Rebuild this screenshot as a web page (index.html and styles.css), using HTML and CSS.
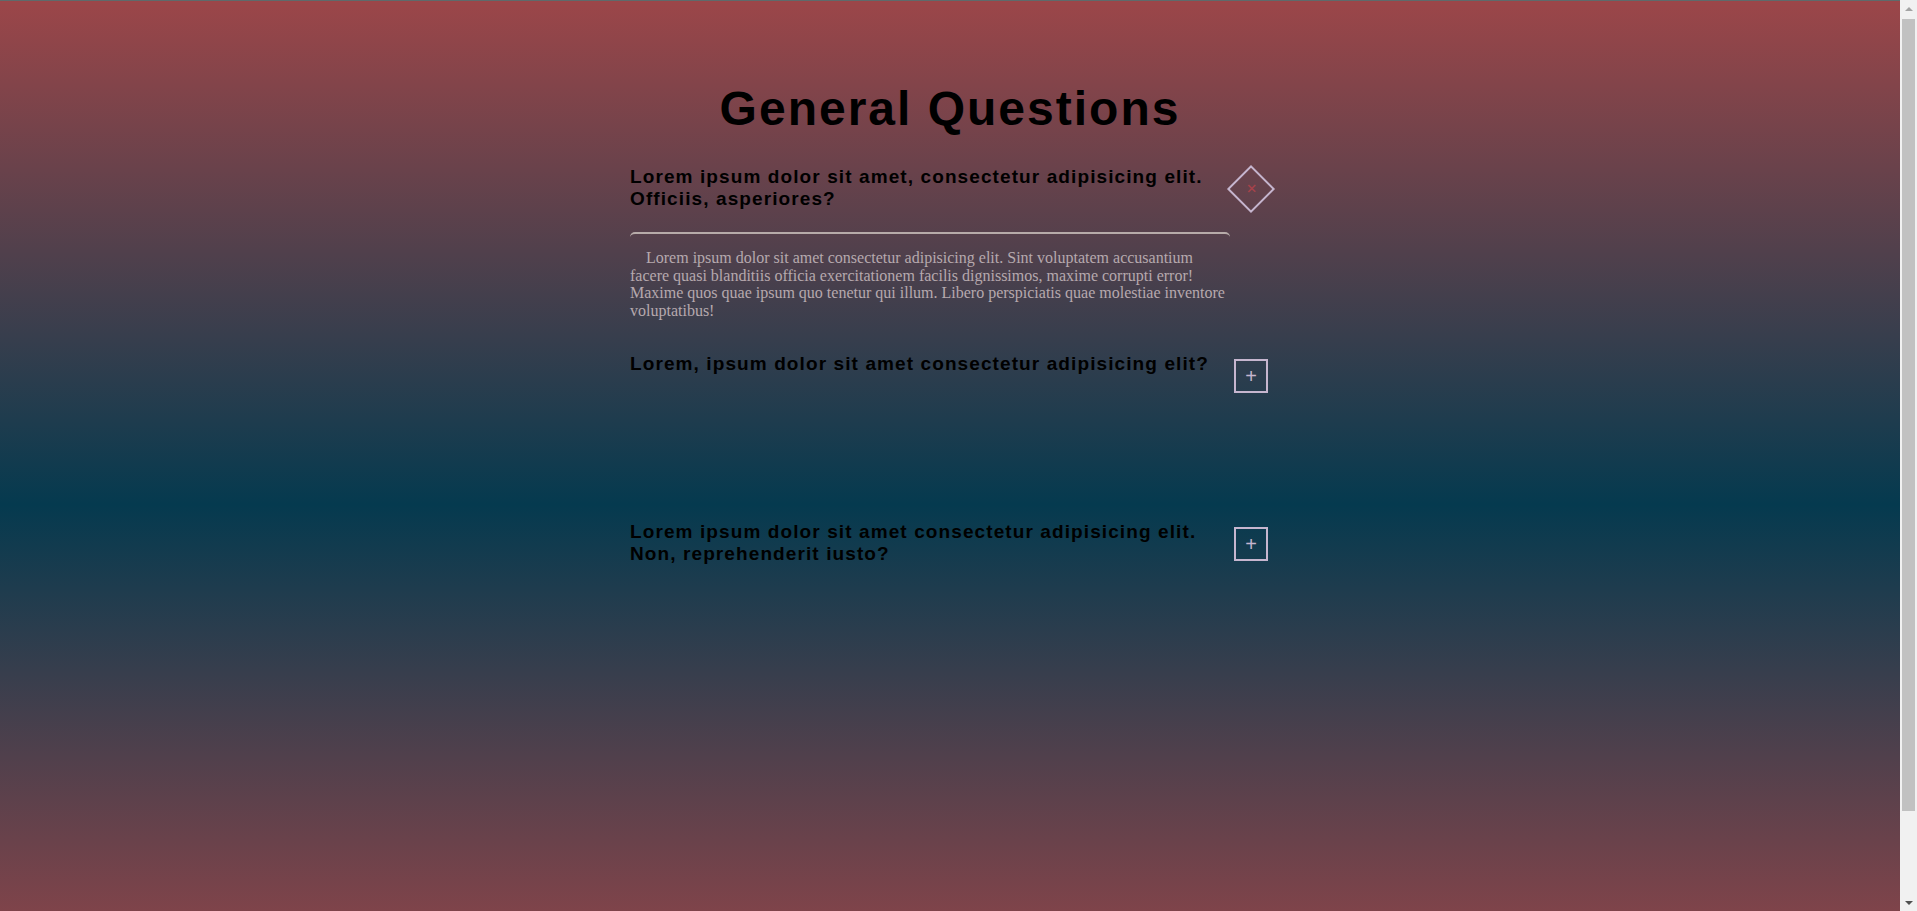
FILE: index.html
```html
<!DOCTYPE html>
<html lang="en">
<head>
<meta charset="utf-8">
<title>General Questions</title>
<link rel="stylesheet" href="styles.css">
</head>
<body>
<div class="page">
  <main class="faq">
    <h1 class="faq-title">General Questions</h1>

    <section class="item item-open">
      <div class="question">
        <h3 class="question-text">Lorem ipsum dolor sit amet, consectetur adipisicing elit. Officiis, asperiores?</h3>
        <button class="toggle" type="button"><span class="toggle-sign">+</span></button>
      </div>
      <div class="answer">
        <p class="answer-text">Lorem ipsum dolor sit amet consectetur adipisicing elit. Sint voluptatem accusantium facere quasi blanditiis officia exercitationem facilis dignissimos, maxime corrupti error! Maxime quos quae ipsum quo tenetur qui illum. Libero perspiciatis quae molestiae inventore voluptatibus!</p>
      </div>
    </section>

    <section class="item">
      <div class="question">
        <h3 class="question-text">Lorem, ipsum dolor sit amet consectetur adipisicing elit?</h3>
        <button class="toggle" type="button"><span class="toggle-sign">+</span></button>
      </div>
      <div class="answer">
        <p class="answer-text">Lorem ipsum dolor sit amet consectetur adipisicing elit. Sint voluptatem accusantium facere quasi blanditiis officia exercitationem facilis dignissimos, maxime corrupti error! Maxime quos quae ipsum quo tenetur.</p>
      </div>
    </section>

    <section class="item">
      <div class="question">
        <h3 class="question-text">Lorem ipsum dolor sit amet consectetur adipisicing elit. Non, reprehenderit iusto?</h3>
        <button class="toggle" type="button"><span class="toggle-sign">+</span></button>
      </div>
      <div class="answer">
        <p class="answer-text">Lorem ipsum dolor sit amet consectetur adipisicing elit. Sint voluptatem accusantium facere quasi blanditiis officia exercitationem facilis dignissimos, maxime corrupti error! Maxime quos quae ipsum quo tenetur qui illum. Libero perspiciatis quae molestiae inventore voluptatibus!</p>
      </div>
    </section>
  </main>
</div>
<div class="scrollbar" aria-hidden="true">
  <div class="sb-button"><span class="sb-arrow sb-arrow-up"></span></div>
  <div class="sb-track"><div class="sb-thumb"></div></div>
  <div class="sb-button"><span class="sb-arrow sb-arrow-down"></span></div>
</div>
</body>
</html>
```

FILE: styles.css
```css
html {
  height: 100%;
  background: linear-gradient(#9c4649 0%, #053a4f 50%, #9c4649 100%) 0 0 / 100% 1009px no-repeat;
  background-color: #9c4649;
}

body {
  margin: 0;
  height: 100%;
  display: flex;
  overflow: hidden;
  font-family: "Liberation Sans", Arial, sans-serif;
}

.page {
  flex: 1;
  min-width: 0;
  border-top: 1px solid #5e6a6b;
}

.faq {
  width: 640px;
  margin: 0 auto;
  padding-top: 80px;
}

.faq-title {
  margin: 0 0 30px;
  font-size: 48px;
  line-height: 55px;
  font-weight: 700;
  letter-spacing: 2px;
  text-align: center;
  color: #000;
}

.item {
  width: 600px;
  margin-bottom: 34px;
}

.question {
  display: flex;
  align-items: flex-start;
  min-height: 42px;
}

.question-text {
  flex: none;
  width: 600px;
  margin: 0;
  font-size: 19px;
  line-height: normal;
  font-weight: 700;
  letter-spacing: 1.1px;
  color: #000;
}

.toggle {
  flex: none;
  width: 34px;
  height: 34px;
  margin: 6px 0 0 4px;
  padding: 0;
  display: flex;
  align-items: center;
  justify-content: center;
  border: 2px solid #c6b6cf;
  background: transparent;
  color: #c6b6cf;
  font-family: "Liberation Sans", Arial, sans-serif;
  font-size: 20px;
  line-height: 1;
}

.toggle-sign {
  display: block;
}

.item-open .toggle {
  transform: rotate(45deg);
}

.item-open .toggle-sign {
  color: #a6424a;
  transform: translateY(-1px);
}

.answer {
  margin-top: 22px;
  border-top: 2px solid #b7aba9;
  border-radius: 5px;
  visibility: hidden;
}

.item-open .answer {
  visibility: visible;
}

.answer-text {
  margin: 15px 0 0;
  font-family: "Liberation Serif", "Times New Roman", serif;
  font-size: 16px;
  line-height: 17.6px;
  text-indent: 16px;
  color: #b6a9ae;
}

/* static look of the browser's vertical scrollbar */
.scrollbar {
  flex: none;
  width: 17px;
  display: flex;
  flex-direction: column;
  background: #f1f1f1;
}

.sb-button {
  flex: none;
  height: 17px;
  display: flex;
  align-items: center;
  justify-content: center;
}

.sb-arrow {
  width: 0;
  height: 0;
  border-left: 4px solid transparent;
  border-right: 4px solid transparent;
}

.sb-arrow-up {
  border-bottom: 4px solid #a3a3a3;
}

.sb-arrow-down {
  border-top: 4px solid #505050;
}

.sb-track {
  flex: 1;
  padding: 2px 2px 0;
}

.sb-thumb {
  height: 792px;
  background: #c1c1c1;
}
```
